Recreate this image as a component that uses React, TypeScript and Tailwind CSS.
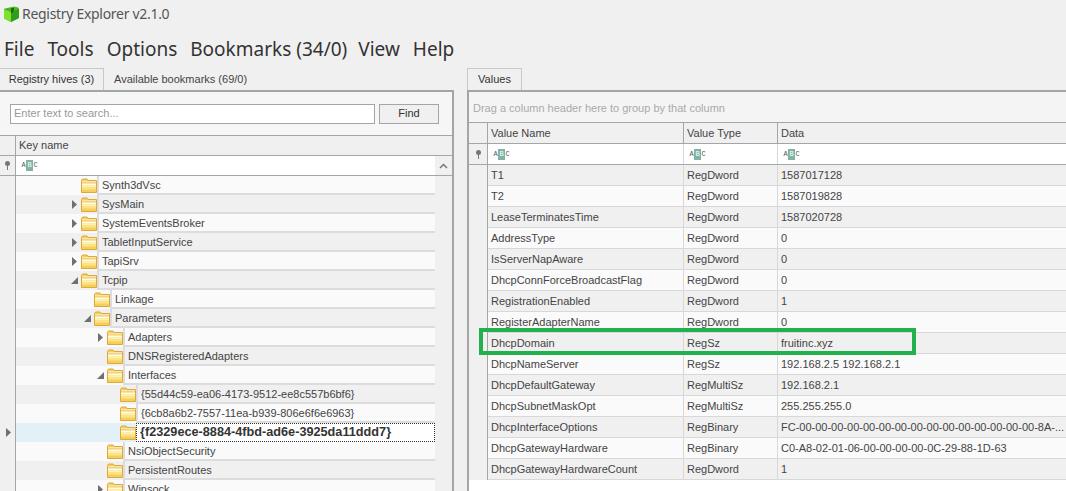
const menuItems = ["File", "Tools", "Options", "Bookmarks (34/0)", "View", "Help"]

const treeRows: { name: string; level: number; arrow?: "right" | "down"; selected?: boolean }[] = [
  { name: "Synth3dVsc", level: 0 },
  { name: "SysMain", level: 0, arrow: "right" },
  { name: "SystemEventsBroker", level: 0, arrow: "right" },
  { name: "TabletInputService", level: 0, arrow: "right" },
  { name: "TapiSrv", level: 0, arrow: "right" },
  { name: "Tcpip", level: 0, arrow: "down" },
  { name: "Linkage", level: 1 },
  { name: "Parameters", level: 1, arrow: "down" },
  { name: "Adapters", level: 2, arrow: "right" },
  { name: "DNSRegisteredAdapters", level: 2 },
  { name: "Interfaces", level: 2, arrow: "down" },
  { name: "{55d44c59-ea06-4173-9512-ee8c557b6bf6}", level: 3 },
  { name: "{6cb8a6b2-7557-11ea-b939-806e6f6e6963}", level: 3 },
  { name: "{f2329ece-8884-4fbd-ad6e-3925da11ddd7}", level: 3, selected: true },
  { name: "NsiObjectSecurity", level: 2 },
  { name: "PersistentRoutes", level: 2 },
  { name: "Winsock", level: 2, arrow: "right" },
]

const valueRows = [
  ["T1", "RegDword", "1587017128"],
  ["T2", "RegDword", "1587019828"],
  ["LeaseTerminatesTime", "RegDword", "1587020728"],
  ["AddressType", "RegDword", "0"],
  ["IsServerNapAware", "RegDword", "0"],
  ["DhcpConnForceBroadcastFlag", "RegDword", "0"],
  ["RegistrationEnabled", "RegDword", "1"],
  ["RegisterAdapterName", "RegDword", "0"],
  ["DhcpDomain", "RegSz", "fruitinc.xyz"],
  ["DhcpNameServer", "RegSz", "192.168.2.5 192.168.2.1"],
  ["DhcpDefaultGateway", "RegMultiSz", "192.168.2.1"],
  ["DhcpSubnetMaskOpt", "RegMultiSz", "255.255.255.0"],
  ["DhcpInterfaceOptions", "RegBinary", "FC-00-00-00-00-00-00-00-00-00-00-00-00-00-00-00-8A-..."],
  ["DhcpGatewayHardware", "RegBinary", "C0-A8-02-01-06-00-00-00-00-0C-29-88-1D-63"],
  ["DhcpGatewayHardwareCount", "RegDword", "1"],
]

function AppLogo() {
  return (
    <svg width="16" height="16" viewBox="0 0 16 16" className="shrink-0">
      <path d="M1 3.5 Q1 2.5 2 2.5 L11 0.5 L15 1.5 Q16 2 16 3 V11 Q16 12 15 12.5 L9 15.5 Q8 16 7 15.5 L2 13 Q1 12.5 1 11.5 Z" fill="#4db81e" />
      <path d="M1 3.5 L8 6 V16 L2 13 Q1 12.5 1 11.5 Z" fill="#7fe02e" />
      <path d="M8 6 L16 3 V11 Q16 12 15 12.5 L9 15.5 L8 16 Z" fill="#2f9e1a" />
      <path d="M8 2 H11 V5 H10 V7 H8 Z" fill="#1d6b12" />
    </svg>
  )
}

function Folder() {
  return (
    <svg width="16" height="15" viewBox="0 0 16 15" className="shrink-0">
      <path d="M0.5 2.5 L1.5 1 H6 L7 2.5 H15.5 V14.5 H0.5 Z" fill="#f5cf5c" stroke="#e0a838" />
      <rect x="1" y="3.5" width="14" height="1" fill="#fffdf0" />
      <rect x="1" y="4.5" width="14" height="1" fill="#e5c262" />
      <rect x="1" y="5.5" width="14" height="2" fill="#fffce8" />
      <rect x="1" y="7.5" width="14" height="2" fill="#fff2b0" />
      <rect x="1" y="9.5" width="14" height="2" fill="#fbe487" />
    </svg>
  )
}

function Arrow({ dir }: { dir: "right" | "down" }) {
  if (dir === "right") {
    return (
      <svg width="5" height="9" viewBox="0 0 5 9">
        <path d="M0 0 L5 4.5 L0 9 Z" fill="#6f6f6f" />
      </svg>
    )
  }
  return (
    <svg width="7" height="7" viewBox="0 0 7 7">
      <path d="M7 0 V7 H0 Z" fill="#6f6f6f" />
    </svg>
  )
}

function AbcIcon() {
  return (
    <span className="flex items-center font-['Liberation_Mono',monospace] text-[7px] leading-[11px] text-[#555]">
      <span className="w-[5px] text-center">A</span>
      <span className="w-[7px] bg-[#7fb3a3] text-center text-white">B</span>
      <span className="w-[5px] text-center">C</span>
    </span>
  )
}

function PinIcon() {
  return (
    <svg width="7" height="9" viewBox="0 0 7 9">
      <circle cx="3.5" cy="2.5" r="2.5" fill="#777" />
      <rect x="3" y="4" width="1" height="5" fill="#777" />
    </svg>
  )
}

function TreeRow({ row, index }: { row: (typeof treeRows)[number]; index: number }) {
  const band = row.selected ? "bg-[#e4f0f8]" : index % 2 === 1 ? "bg-[#f0f0f0]" : "bg-[#fafafa]"
  return (
    <div className="flex h-[19px] shrink-0">
      <div className="flex w-[16px] shrink-0 items-center justify-center border-r border-[#a5a5a5] bg-[#f0f0f0] pl-[1px]">
        {row.selected && <Arrow dir="right" />}
      </div>
      <div className={`flex flex-1 min-w-0 ${band}`}>
        <div className={`flex shrink-0 items-center ${row.level === 0 ? "w-[81px]" : row.level === 1 ? "w-[94px]" : row.level === 2 ? "w-[107px]" : "w-[120px]"} justify-end`}>
          <span className="mr-[3px] flex w-[8px] justify-center">{row.arrow && <Arrow dir={row.arrow} />}</span>
          <span className="flex w-[16px] shrink-0"><Folder /></span>
        </div>
        <div
          className={`flex flex-1 min-w-0 items-center pl-[3px] pt-[1px] whitespace-nowrap ${
            row.selected
              ? "border border-dotted border-[#333] bg-white text-[12.7px] font-bold text-[#333]"
              : "border-b-2 border-l-2 border-[#dcdcdc]"
          }`}
        >
          {row.name}
        </div>
      </div>
    </div>
  )
}

function ValueRow({ row, index }: { row: string[]; index: number }) {
  const band = index % 2 === 0 ? "bg-[#f0f0f0]" : "bg-[#fafafa]"
  return (
    <div className="flex h-[21px] shrink-0">
      <div className="w-[19px] shrink-0 border-r border-[#a5a5a5] bg-[#f0f0f0]" />
      <div className={`flex flex-1 min-w-0 border-b border-[#d8d8d8] ${band}`}>
        <div className="flex w-[196px] shrink-0 items-center border-r border-[#d8d8d8] pl-[3px]">{row[0]}</div>
        <div className="flex w-[94px] shrink-0 items-center border-r border-[#d8d8d8] pl-[3px]">{row[1]}</div>
        <div className="flex flex-1 min-w-0 items-center pl-[3px] whitespace-nowrap">{row[2]}</div>
      </div>
    </div>
  )
}

export default function App() {
  return (
    <div className="relative flex h-[491px] w-[1066px] flex-col overflow-hidden bg-[#f0f0f0] font-['Liberation_Sans',sans-serif] text-[11px] text-[#444]">
      <div className="flex h-[28px] shrink-0 items-center gap-[3px] pl-[3px] font-['Noto_Sans',sans-serif] text-[14px] leading-none tracking-[-0.3px] text-[#555]">
        <AppLogo />
        <span>Registry Explorer v2.1.0</span>
      </div>

      <div className="flex h-[40px] shrink-0 items-center gap-[13px] pl-[4px] pt-[2px] font-['Noto_Sans',sans-serif] text-[19px] text-[#333]">
        {menuItems.map((item) => (
          <span key={item} className={item === "Bookmarks (34/0)" ? "-mr-[2px]" : ""}>
            {item}
          </span>
        ))}
      </div>

      <div className="flex min-h-0 flex-1">
        <div className="flex w-[467px] shrink-0 flex-col">
          <div className="flex h-[22px] shrink-0 items-end">
            <div className="flex h-[22px] w-[104px] items-center justify-center border-r border-t border-[#c8c8c8] text-[#333]">
              Registry hives (3)
            </div>
            <div className="pb-[3px] pl-[10px]">Available bookmarks (69/0)</div>
          </div>
          <div className="flex min-h-0 w-[454px] flex-1 flex-col border-r-2 border-t-2 border-[#a5a5a5]">
            <div className="flex h-[43px] shrink-0 items-center gap-[4px] bg-[#f6f6f6] pl-[10px]">
              <div className="flex h-[20px] w-[365px] items-center border border-[#a5a5a5] bg-white pl-[3px] text-[#999]">
                Enter text to search...
              </div>
              <div className="flex h-[20px] w-[60px] items-center justify-center border border-[#a5a5a5] bg-[#f0f0f0] text-[#333]">
                Find
              </div>
            </div>
            <div className="flex h-[21px] shrink-0 border-y border-[#a5a5a5]">
              <div className="w-[16px] shrink-0 border-r border-[#a5a5a5]" />
              <div className="flex items-center pl-[3px]">Key name</div>
            </div>
            <div className="flex h-[20px] shrink-0 border-b border-[#a5a5a5]">
              <div className="flex w-[16px] shrink-0 items-center justify-center border-r border-[#a5a5a5]">
                <PinIcon />
              </div>
              <div className="flex flex-1 items-center bg-white pl-[5px]">
                <AbcIcon />
              </div>
              <div className="flex w-[17px] shrink-0 items-center justify-center bg-[#f0f0f0] text-[#777]">
                <svg width="9" height="6" viewBox="0 0 9 6">
                  <path d="M1 5 L4.5 1.5 L8 5" fill="none" stroke="#777" strokeWidth="1.5" />
                </svg>
              </div>
            </div>
            <div className="flex min-h-0 flex-1">
              <div className="flex min-w-0 flex-1 flex-col overflow-hidden">
                {treeRows.map((row, i) => (
                  <TreeRow key={row.name} row={row} index={i} />
                ))}
              </div>
              <div className="w-[17px] shrink-0 bg-[#f0f0f0]" />
            </div>
          </div>
        </div>

        <div className="flex min-w-0 flex-1 flex-col">
          <div className="flex h-[22px] shrink-0">
            <div className="flex w-[55px] items-center justify-center border-x border-t border-[#c8c8c8] text-[#333]">
              Values
            </div>
          </div>
          <div className="flex min-h-0 flex-1 flex-col border-l-2 border-t-2 border-[#a5a5a5] bg-white">
            <div className="flex h-[30px] shrink-0 items-center bg-[#f4f4f4] pl-[4px] pt-[2px] text-[#aaa]">
              Drag a column header here to group by that column
            </div>
            <div className="flex h-[22px] shrink-0 border-y border-[#a5a5a5] bg-[#f0f0f0]">
              <div className="w-[19px] shrink-0 border-r border-[#a5a5a5]" />
              <div className="flex w-[196px] shrink-0 items-center border-r border-[#a5a5a5] pl-[3px]">Value Name</div>
              <div className="flex w-[94px] shrink-0 items-center border-r border-[#a5a5a5] pl-[3px]">Value Type</div>
              <div className="flex items-center pl-[3px]">Data</div>
            </div>
            <div className="flex h-[21px] shrink-0 border-b border-[#a5a5a5]">
              <div className="flex w-[19px] shrink-0 items-center justify-center border-r border-[#a5a5a5] bg-[#f0f0f0]">
                <PinIcon />
              </div>
              <div className="flex w-[196px] shrink-0 items-center border-r border-[#d8d8d8] pl-[5px]"><AbcIcon /></div>
              <div className="flex w-[94px] shrink-0 items-center border-r border-[#d8d8d8] pl-[5px]"><AbcIcon /></div>
              <div className="flex items-center pl-[5px]"><AbcIcon /></div>
            </div>
            {valueRows.map((row, i) => (
              <ValueRow key={row[0]} row={row} index={i} />
            ))}
          </div>
        </div>
      </div>

      {/* green highlight drawn over the DhcpDomain row */}
      <div className="absolute left-[479px] top-[328px] h-[27px] w-[437px] border-[4px] border-[#22b14c]" />
    </div>
  )
}
